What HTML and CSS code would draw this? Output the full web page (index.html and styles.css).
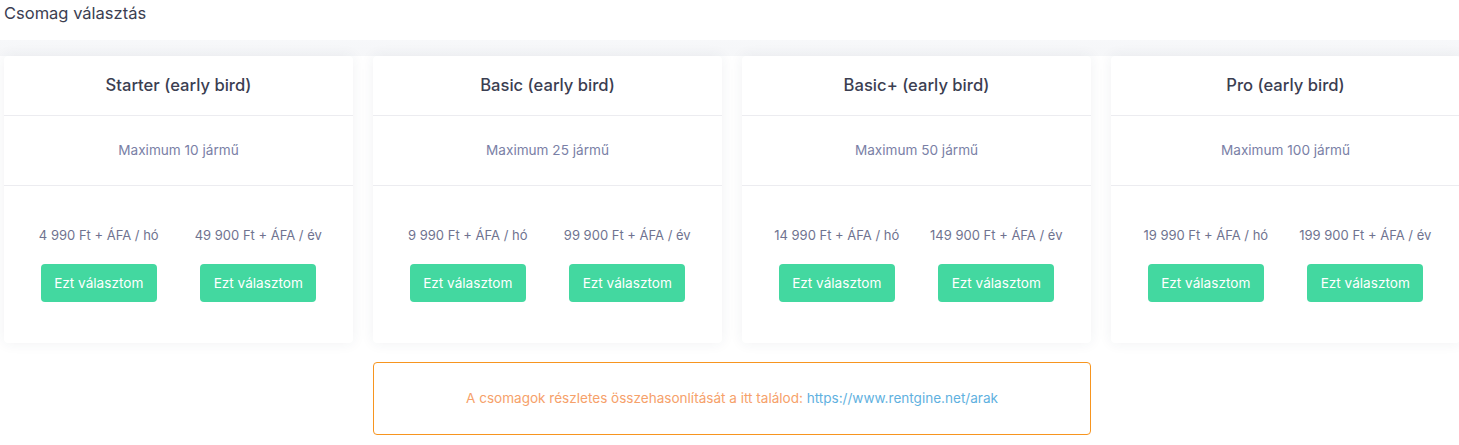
FILE: index.html
```html
<!DOCTYPE html>
<html lang="hu">
<head>
  <meta charset="UTF-8">
  <title>Csomag választás</title>
  <link rel="stylesheet" href="styles.css">
</head>
<body>

<h2 class="page-title">Csomag választás</h2>

<div class="band"></div>

<div class="plans">
  <div class="plan">
    <div class="plan-head">Starter (early bird)</div>
    <div class="plan-limit">Maximum 10 jármű</div>
    <div class="plan-prices">
      <div class="price">
        <div class="price-text">4 990 Ft + ÁFA / hó</div>
        <button class="pick">Ezt választom</button>
      </div>
      <div class="price">
        <div class="price-text">49 900 Ft + ÁFA / év</div>
        <button class="pick">Ezt választom</button>
      </div>
    </div>
  </div>

  <div class="plan">
    <div class="plan-head">Basic (early bird)</div>
    <div class="plan-limit">Maximum 25 jármű</div>
    <div class="plan-prices">
      <div class="price">
        <div class="price-text">9 990 Ft + ÁFA / hó</div>
        <button class="pick">Ezt választom</button>
      </div>
      <div class="price">
        <div class="price-text">99 900 Ft + ÁFA / év</div>
        <button class="pick">Ezt választom</button>
      </div>
    </div>
  </div>

  <div class="plan">
    <div class="plan-head">Basic+ (early bird)</div>
    <div class="plan-limit">Maximum 50 jármű</div>
    <div class="plan-prices">
      <div class="price">
        <div class="price-text">14 990 Ft + ÁFA / hó</div>
        <button class="pick">Ezt választom</button>
      </div>
      <div class="price">
        <div class="price-text">149 900 Ft + ÁFA / év</div>
        <button class="pick">Ezt választom</button>
      </div>
    </div>
  </div>

  <div class="plan">
    <div class="plan-head">Pro (early bird)</div>
    <div class="plan-limit">Maximum 100 jármű</div>
    <div class="plan-prices">
      <div class="price">
        <div class="price-text">19 990 Ft + ÁFA / hó</div>
        <button class="pick">Ezt választom</button>
      </div>
      <div class="price">
        <div class="price-text">199 900 Ft + ÁFA / év</div>
        <button class="pick">Ezt választom</button>
      </div>
    </div>
  </div>
</div>

<div class="notice-row">
  <div class="notice">
    A csomagok részletes összehasonlítását a itt találod: <a href="#">https://www.rentgine.net/arak</a>
  </div>
</div>

</body>
</html>
```

FILE: styles.css
```css
body {
  margin: 0;
  padding: 0;
  background: #fff;
  font-family: 'Inter', 'Open Sans', sans-serif;
  color: #3b3e51;
  overflow: hidden;
}

.page-title {
  margin: 0;
  padding: 4px 4px 0;
  height: 36px;
  font-size: 16.5px;
  font-weight: 400;
  line-height: 18px;
}

.band {
  height: 16px;
  background: linear-gradient(#f7f8fa, #f5f6f8);
}

.plans {
  display: flex;
  gap: 20px;
  padding: 0 4px;
}

.plan {
  flex: 0 0 349px;
  background: #fff;
  border-radius: 4px;
  box-shadow: 0 0 14px rgba(40, 50, 90, 0.07);
  text-align: center;
}

.plan-head {
  height: 59px;
  line-height: 59px;
  font-size: 16.6px;
  font-weight: 500;
  border-bottom: 1px solid #ececf0;
}

.plan-limit {
  height: 69px;
  line-height: 69px;
  font-size: 13.6px;
  color: #7a7fa6;
  border-bottom: 1px solid #ececf0;
}

.plan-prices {
  display: grid;
  grid-template-columns: 1fr 1fr;
  padding: 39px 15px 41px;
}

.price-text {
  font-size: 13px;
  color: #6f7390;
  line-height: 20px;
  margin-bottom: 19px;
}

.pick {
  width: 116px;
  height: 38px;
  border: none;
  border-radius: 4px;
  background: #43d8a0;
  color: #fff;
  font-family: inherit;
  font-size: 13.6px;
  cursor: pointer;
}

.notice-row {
  display: flex;
  justify-content: center;
  padding: 19px 0 0 5px;
}

.notice {
  width: 716px;
  height: 71px;
  line-height: 71px;
  border: 1px solid #f7951f;
  border-radius: 4px;
  text-align: center;
  font-size: 13.55px;
  color: #f6a16a;
}

.notice a {
  color: #5fb1e0;
  text-decoration: none;
}
```
